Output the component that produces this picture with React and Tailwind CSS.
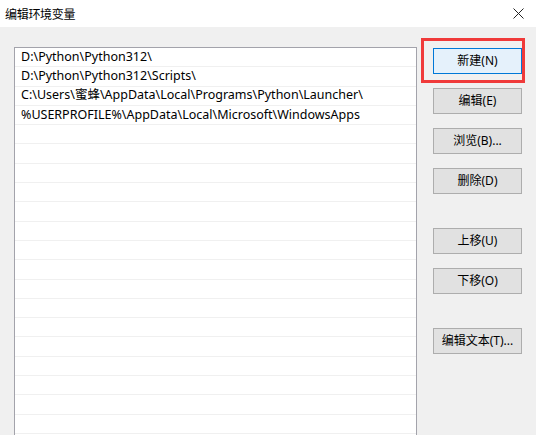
import React from "react";

const paths = [
  "D:\\Python\\Python312\\",
  "D:\\Python\\Python312\\Scripts\\",
  "C:\\Users\\蜜蜂\\AppData\\Local\\Programs\\Python\\Launcher\\",
  "%USERPROFILE%\\AppData\\Local\\Microsoft\\WindowsApps",
];

const rows = Array.from({ length: 21 }, (_, i) => paths[i] || "");

function Btn({ children, primary, className = "" }) {
  return (
    <div
      className={
        "w-[89px] h-[26px] flex items-center justify-center text-[12px] text-black border " +
        (primary ? "bg-[#e5f1fb] border-[#0078d7] " : "bg-[#e1e1e1] border-[#adadad] ") +
        className
      }
    >
      {children}
    </div>
  );
}

export default function App() {
  return (
    <div
      className="relative w-[536px] h-[435px] overflow-hidden bg-[#f0f0f0] text-black"
      style={{ fontFamily: '"Noto Sans", "Noto Sans CJK SC", sans-serif' }}
    >
      <div className="h-[27px] bg-white flex items-center justify-between pl-[5px] pr-[12px]">
        <span className="text-[12px] tracking-[-0.3px]" style={{ fontFamily: '"Noto Sans CJK SC", sans-serif' }}>编辑环境变量</span>
        <svg width="11" height="11" viewBox="0 0 11 11" className="mt-[-1px]">
          <path d="M0.5 0.5 L10.5 10.5 M10.5 0.5 L0.5 10.5" stroke="#222" strokeWidth="1" />
        </svg>
      </div>
      <div className="flex pl-[14px] pt-[20px]">
        <div className="w-[403px] h-[420px] bg-white border border-[#a3a3ab] overflow-hidden">
          {rows.map((t, i) => (
            <div
              key={i}
              className="h-[19.3px] border-b border-[#f0f0f0] pl-[6px] flex items-center text-[12.5px] whitespace-nowrap"
            >
              {t}
            </div>
          ))}
        </div>
        <div className="flex flex-col ml-[16px] pt-[1px]">
          <Btn primary>新建(N)</Btn>
          <Btn className="mt-[14px]">编辑(E)</Btn>
          <Btn className="mt-[14px]">浏览(B)...</Btn>
          <Btn className="mt-[14px]">删除(D)</Btn>
          <Btn className="mt-[34px]">上移(U)</Btn>
          <Btn className="mt-[14px]">下移(O)</Btn>
          <Btn className="mt-[34px]">编辑文本(T)...</Btn>
        </div>
      </div>
      <div className="absolute left-[421px] top-[38px] w-[104px] h-[45px] border-[3px] border-[#f03a3a]" />
    </div>
  );
}
